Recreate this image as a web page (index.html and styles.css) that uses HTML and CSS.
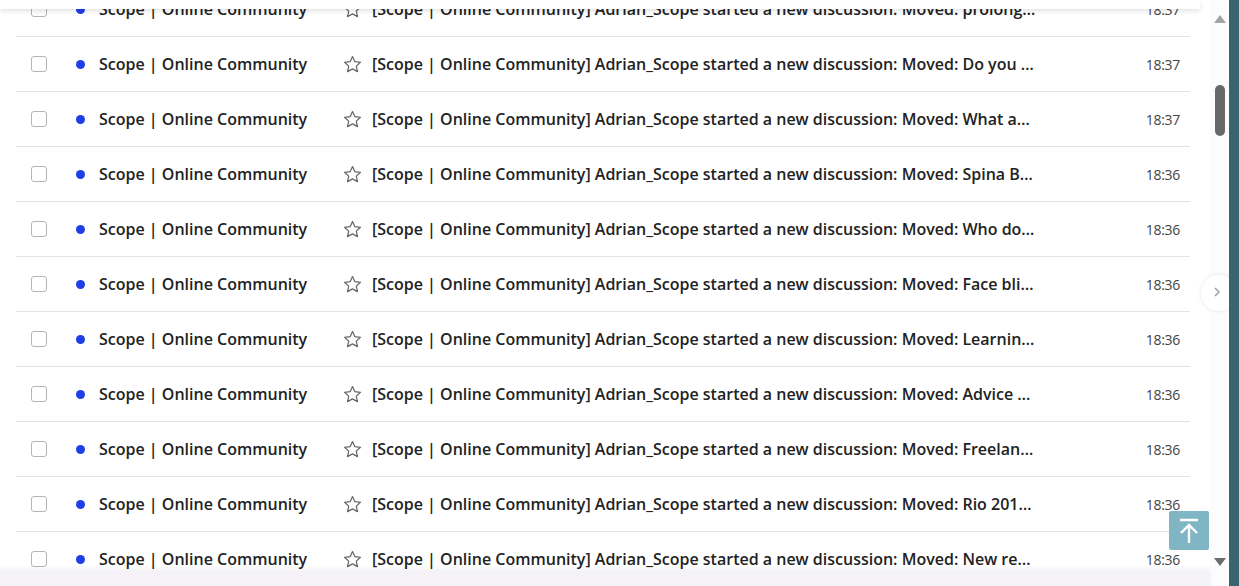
FILE: index.html
```html
<!DOCTYPE html>
<html lang="en">
<head>
    <meta charset="UTF-8">
    <title>Inbox</title>
    <link rel="stylesheet" href="styles.css">
</head>
<body>
    <div class="page">
        <div class="main">
            <div class="list">
                <div class="row"><span class="check"></span><span class="dot"></span><span class="from">Scope | Online Community</span><svg class="star" viewBox="0 0 20 20"><path d="M10 1.6l2.5 5.4 5.9.7-4.4 4 1.2 5.8L10 14.6l-5.2 2.9L6 11.7l-4.4-4 5.9-.7z"/></svg><span class="subject">[Scope | Online Community] Adrian_Scope started a new discussion: Moved: prolonged waiting times</span><span class="time">18:37</span></div>
                <div class="row"><span class="check"></span><span class="dot"></span><span class="from">Scope | Online Community</span><svg class="star" viewBox="0 0 20 20"><path d="M10 1.6l2.5 5.4 5.9.7-4.4 4 1.2 5.8L10 14.6l-5.2 2.9L6 11.7l-4.4-4 5.9-.7z"/></svg><span class="subject">[Scope | Online Community] Adrian_Scope started a new discussion: Moved: Do you have any advice</span><span class="time">18:37</span></div>
                <div class="row"><span class="check"></span><span class="dot"></span><span class="from">Scope | Online Community</span><svg class="star" viewBox="0 0 20 20"><path d="M10 1.6l2.5 5.4 5.9.7-4.4 4 1.2 5.8L10 14.6l-5.2 2.9L6 11.7l-4.4-4 5.9-.7z"/></svg><span class="subject">[Scope | Online Community] Adrian_Scope started a new discussion: Moved: What are the options</span><span class="time">18:37</span></div>
                <div class="row"><span class="check"></span><span class="dot"></span><span class="from">Scope | Online Community</span><svg class="star" viewBox="0 0 20 20"><path d="M10 1.6l2.5 5.4 5.9.7-4.4 4 1.2 5.8L10 14.6l-5.2 2.9L6 11.7l-4.4-4 5.9-.7z"/></svg><span class="subject">[Scope | Online Community] Adrian_Scope started a new discussion: Moved: Spina Bifida support</span><span class="time">18:36</span></div>
                <div class="row"><span class="check"></span><span class="dot"></span><span class="from">Scope | Online Community</span><svg class="star" viewBox="0 0 20 20"><path d="M10 1.6l2.5 5.4 5.9.7-4.4 4 1.2 5.8L10 14.6l-5.2 2.9L6 11.7l-4.4-4 5.9-.7z"/></svg><span class="subject">[Scope | Online Community] Adrian_Scope started a new discussion: Moved: Who do I contact</span><span class="time">18:36</span></div>
                <div class="row"><span class="check"></span><span class="dot"></span><span class="from">Scope | Online Community</span><svg class="star" viewBox="0 0 20 20"><path d="M10 1.6l2.5 5.4 5.9.7-4.4 4 1.2 5.8L10 14.6l-5.2 2.9L6 11.7l-4.4-4 5.9-.7z"/></svg><span class="subject">[Scope | Online Community] Adrian_Scope started a new discussion: Moved: Face blindness</span><span class="time">18:36</span></div>
                <div class="row"><span class="check"></span><span class="dot"></span><span class="from">Scope | Online Community</span><svg class="star" viewBox="0 0 20 20"><path d="M10 1.6l2.5 5.4 5.9.7-4.4 4 1.2 5.8L10 14.6l-5.2 2.9L6 11.7l-4.4-4 5.9-.7z"/></svg><span class="subject">[Scope | Online Community] Adrian_Scope started a new discussion: Moved: Learning disability</span><span class="time">18:36</span></div>
                <div class="row"><span class="check"></span><span class="dot"></span><span class="from">Scope | Online Community</span><svg class="star" viewBox="0 0 20 20"><path d="M10 1.6l2.5 5.4 5.9.7-4.4 4 1.2 5.8L10 14.6l-5.2 2.9L6 11.7l-4.4-4 5.9-.7z"/></svg><span class="subject">[Scope | Online Community] Adrian_Scope started a new discussion: Moved: Advice on benefits</span><span class="time">18:36</span></div>
                <div class="row"><span class="check"></span><span class="dot"></span><span class="from">Scope | Online Community</span><svg class="star" viewBox="0 0 20 20"><path d="M10 1.6l2.5 5.4 5.9.7-4.4 4 1.2 5.8L10 14.6l-5.2 2.9L6 11.7l-4.4-4 5.9-.7z"/></svg><span class="subject">[Scope | Online Community] Adrian_Scope started a new discussion: Moved: Freelance work</span><span class="time">18:36</span></div>
                <div class="row"><span class="check"></span><span class="dot"></span><span class="from">Scope | Online Community</span><svg class="star" viewBox="0 0 20 20"><path d="M10 1.6l2.5 5.4 5.9.7-4.4 4 1.2 5.8L10 14.6l-5.2 2.9L6 11.7l-4.4-4 5.9-.7z"/></svg><span class="subject">[Scope | Online Community] Adrian_Scope started a new discussion: Moved: Rio 2016 Paralympics</span><span class="time">18:36</span></div>
                <div class="row"><span class="check"></span><span class="dot"></span><span class="from">Scope | Online Community</span><svg class="star" viewBox="0 0 20 20"><path d="M10 1.6l2.5 5.4 5.9.7-4.4 4 1.2 5.8L10 14.6l-5.2 2.9L6 11.7l-4.4-4 5.9-.7z"/></svg><span class="subject">[Scope | Online Community] Adrian_Scope started a new discussion: Moved: New research</span><span class="time">18:36</span></div>
            </div>
        </div>
        <div class="scrollbar">
            <span class="arrow up"></span>
            <span class="thumb"></span>
            <span class="arrow down"></span>
        </div>
        <div class="edge"></div>
    </div>

    <div class="topbar"></div>
    <div class="footer"></div>
    <button class="side-toggle">
        <svg width="12" height="12" viewBox="0 0 12 12"><path d="M4 2l4 4-4 4" fill="none" stroke="#999" stroke-width="1.4"/></svg>
    </button>
    <button class="to-top">
        <svg width="22" height="26" viewBox="0 0 22 26"><path d="M2 2h18M11 7v18M3 15l8-8 8 8" fill="none" stroke="#fff" stroke-width="2.4"/></svg>
    </button>
</body>
</html>
```

FILE: styles.css
```css
body {
    margin: 0;
    font-family: "Open Sans", sans-serif;
    color: #222;
    background: #fff;
    overflow: hidden;
}
.page {
    display: flex;
    height: 586px;
}
.main {
    flex: 1;
    overflow: hidden;
}
.list {
    margin: -18px 20px 0 16px;
}
.row {
    display: flex;
    align-items: center;
    height: 54px;
    border-bottom: 1px solid #e3e3e3;
    padding: 0 10px 0 15px;
}
.check {
    width: 14px;
    height: 14px;
    border: 1px solid #b5b5b5;
    border-radius: 3px;
    flex: none;
}
.dot {
    width: 9px;
    height: 9px;
    border-radius: 50%;
    background: #1f3fe6;
    margin-left: 29px;
    flex: none;
}
.from {
    margin-left: 14px;
    width: 244px;
    flex: none;
    font-weight: 600;
    font-size: 16px;
}
.star {
    width: 19px;
    height: 19px;
    flex: none;
    fill: none;
    stroke: #666;
    stroke-width: 1.3;
    stroke-linejoin: round;
}
.subject {
    margin-left: 10px;
    width: 664px;
    flex: none;
    font-weight: 600;
    font-size: 16px;
    white-space: nowrap;
    overflow: hidden;
    text-overflow: ellipsis;
}
.time {
    margin-left: auto;
    font-size: 14px;
    color: #444;
    letter-spacing: -0.3px;
}
.scrollbar {
    width: 19px;
    background: #fcfcfc;
    display: flex;
    flex-direction: column;
    align-items: center;
    padding: 15px 0 20px;
}
.arrow {
    width: 0;
    height: 0;
    border-left: 6px solid transparent;
    border-right: 6px solid transparent;
}
.arrow.up {
    border-bottom: 8px solid #a3a3a3;
}
.arrow.down {
    border-top: 8px solid #6c6c6c;
    margin-top: auto;
}
.thumb {
    width: 10px;
    height: 51px;
    border-radius: 5px;
    background: #686868;
    margin-top: 62px;
}
.edge {
    width: 10px;
    background: #3a6470;
    position: relative;
    z-index: 2;
}
.topbar {
    position: fixed;
    top: 0;
    left: 0;
    width: 1200px;
    height: 9px;
    background: #fff;
    box-shadow: 0 2px 5px rgba(0, 0, 0, 0.12);
}
.footer {
    position: fixed;
    bottom: 0;
    left: 0;
    width: 1210px;
    height: 16px;
    background: #f5f3f7;
    box-shadow: 0 -2px 4px rgba(0, 0, 0, 0.05);
}
.side-toggle {
    position: fixed;
    left: 1201px;
    top: 275px;
    width: 36px;
    height: 36px;
    border-radius: 50%;
    border: none;
    background: #fff;
    box-shadow: 0 0 4px rgba(0, 0, 0, 0.1);
    padding: 0 0 0 10px;
    text-align: left;
}
.to-top {
    position: fixed;
    left: 1169px;
    top: 511px;
    width: 40px;
    height: 39px;
    border: none;
    border-radius: 2px;
    background: #80b6c4;
    padding: 0;
    display: flex;
    align-items: center;
    justify-content: center;
    z-index: 3;
}
```
